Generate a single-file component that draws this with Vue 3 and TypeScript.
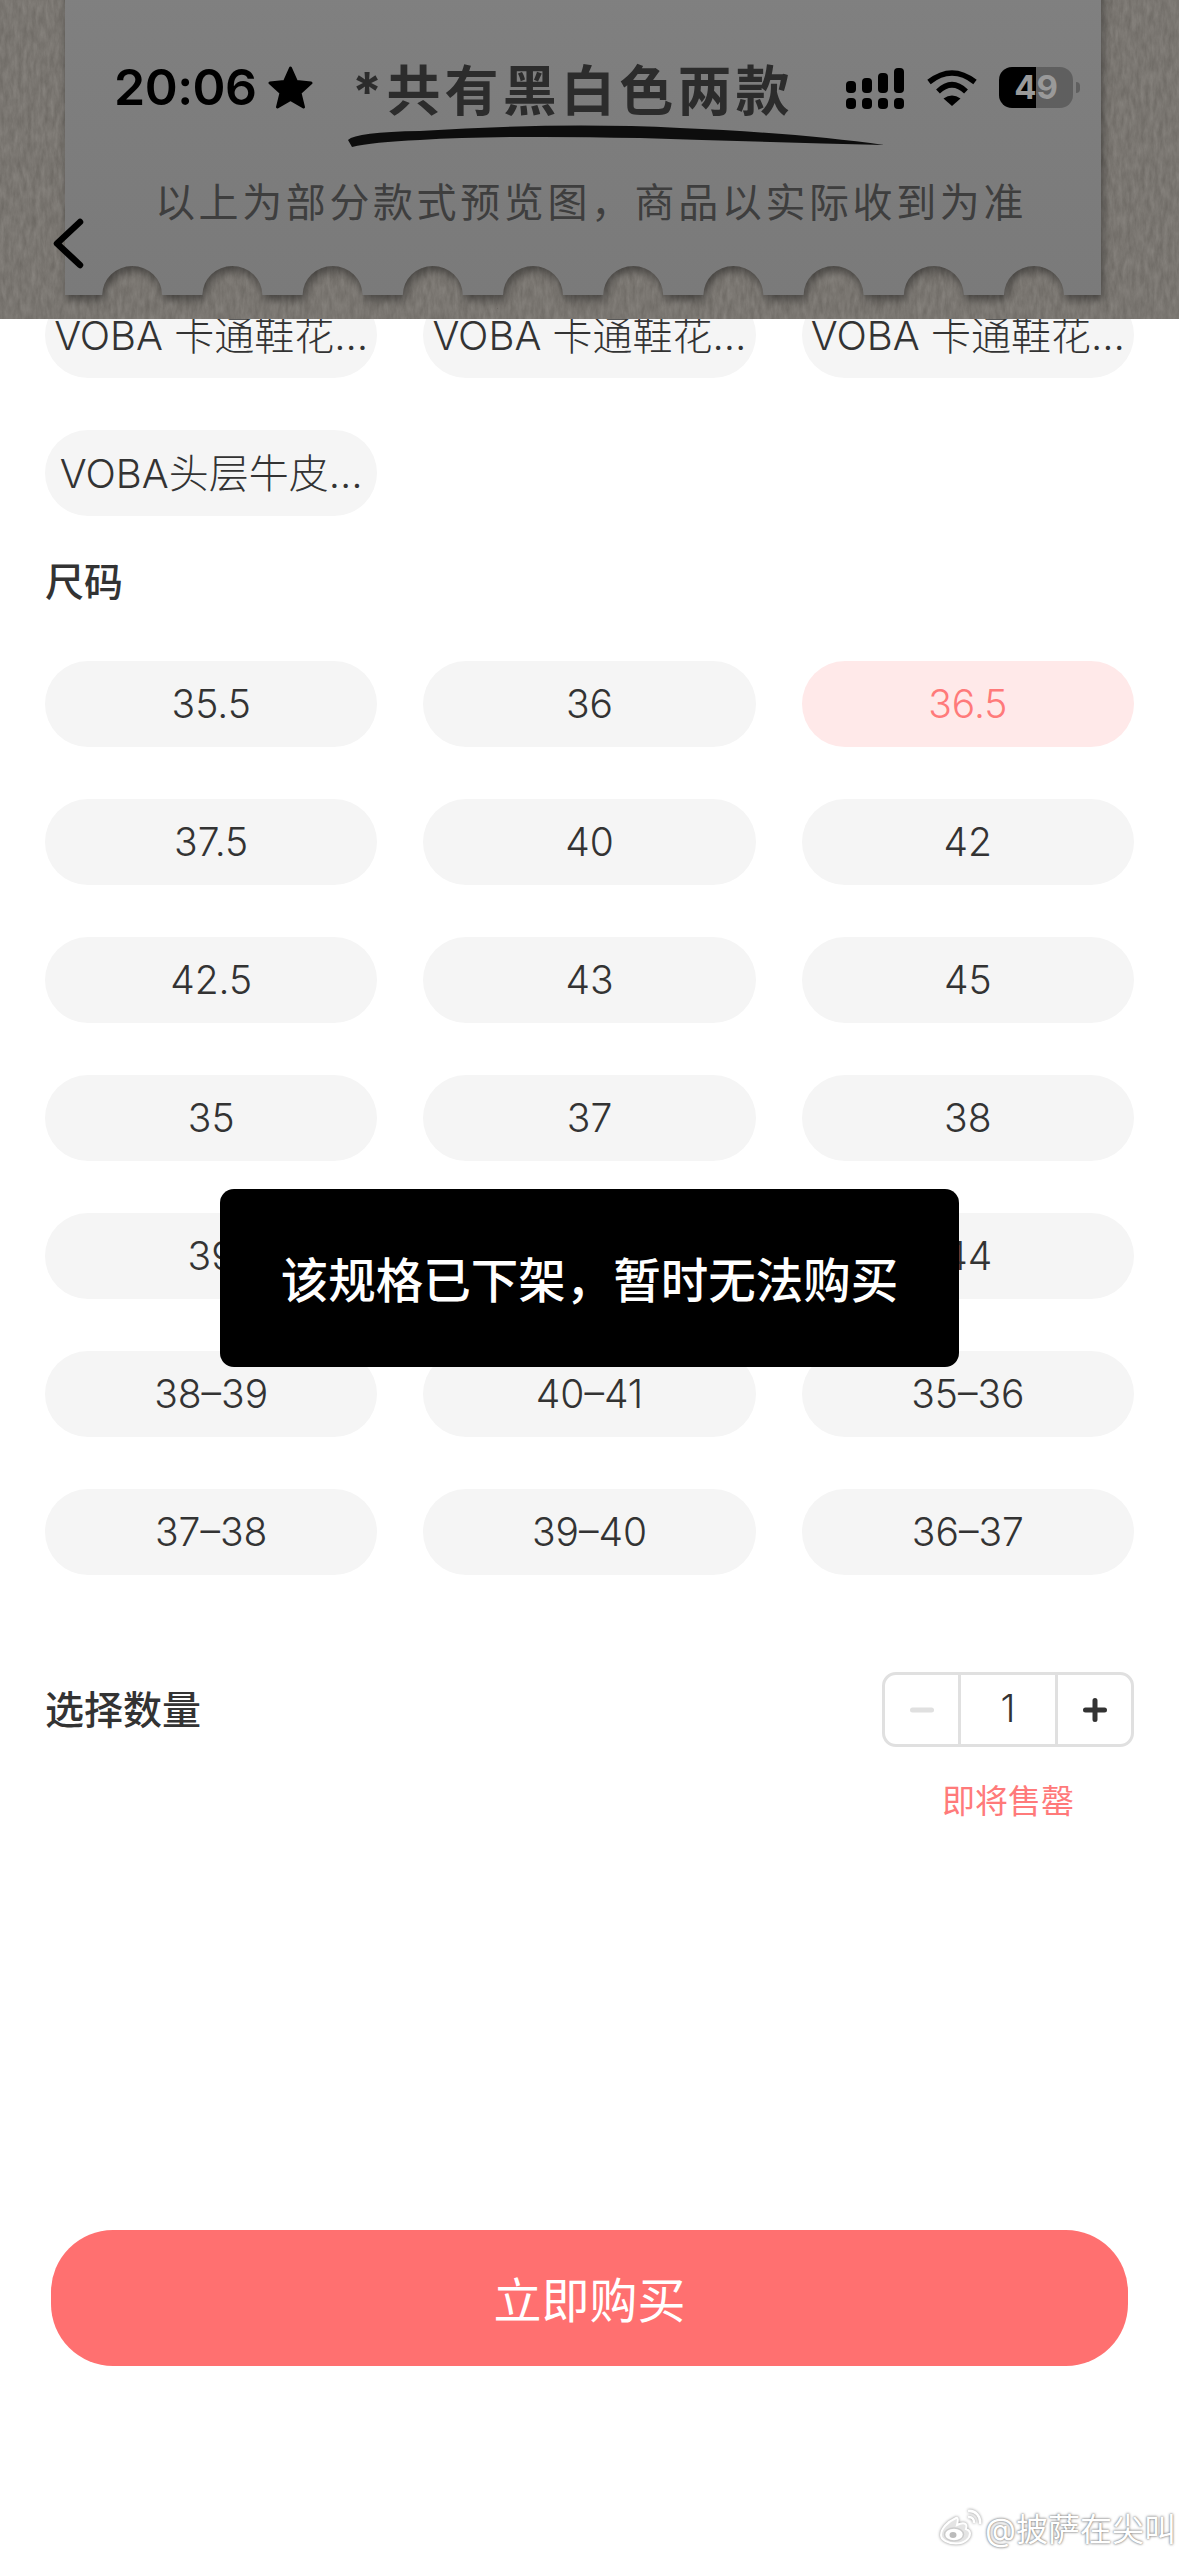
<template>
  <div class="page">
    <header class="hero">
      <svg class="hero-art" width="1179" height="319" viewBox="0 0 1179 319">
        <defs>
          <filter id="paper" x="0" y="0" width="100%" height="100%" color-interpolation-filters="sRGB">
            <feTurbulence type="fractalNoise" baseFrequency="0.22 0.07" numOctaves="5" seed="7" />
            <feColorMatrix type="matrix" values="0 0.12 0 0 0.418  0 0.12 0 0 0.403  0 0.12 0 0 0.383  0 0 0 0 1" />
          </filter>
          <linearGradient id="sheet" x1="0" y1="0" x2="0" y2="1">
            <stop offset="0" stop-color="#808080" />
            <stop offset="0.3" stop-color="#7e7e7e" />
            <stop offset="1" stop-color="#7a7a7a" />
          </linearGradient>
        </defs>
        <rect width="1179" height="319" filter="url(#paper)" />
        <path class="sheet" :d="sheetPath" fill="url(#sheet)" />
        <path
          d="M348 140 Q356 132 420 131 Q560 122 680 128 Q800 133 884 145 Q760 142 640 138 Q500 135 420 140 Q372 142 352 147 Z"
          fill="#0d0d0d"
        />
        <path d="M80 222 L57 243.500 L80 265" fill="none" stroke="#000" stroke-width="6.500" stroke-linecap="round" stroke-linejoin="round" />
      </svg>

      <div class="status">
        <span class="time">20:06</span>
        <svg class="star" width="45" height="43" viewBox="0 0 45 43">
          <path d="M22.500 2 L28.500 15.500 L43 17 L32 26.800 L35.500 41 L22.500 33.500 L9.500 41 L13 26.800 L2 17 L16.500 15.500 Z" fill="#000" stroke="#000" stroke-width="3" stroke-linejoin="round" />
        </svg>
        <span class="promo">*共有黑白色两款</span>
        <svg class="signal" width="58" height="41" viewBox="0 0 58 41">
          <g fill="#000">
            <rect x="0" y="13" width="10" height="12" rx="4" />
            <rect x="16" y="10" width="10" height="15" rx="4" />
            <rect x="32" y="5" width="10" height="20" rx="4" />
            <rect x="48" y="0" width="10" height="25" rx="4" />
            <rect x="0" y="30" width="10" height="11" rx="4" />
            <rect x="16" y="30" width="10" height="11" rx="4" />
            <rect x="32" y="30" width="10" height="11" rx="4" />
            <rect x="48" y="30" width="10" height="11" rx="4" />
          </g>
        </svg>
        <svg class="wifi" width="50" height="37" viewBox="0 0 50 37">
          <path d="M2 13 Q25 -5 48 13" fill="none" stroke="#000" stroke-width="5.500" />
          <path d="M11 22.500 Q25 9 39 22.500" fill="none" stroke="#000" stroke-width="5.500" />
          <path d="M25 37 L16.500 29.500 Q25 23.500 33.500 29.500 Z" fill="#000" />
        </svg>
        <span class="battery">49</span>
        <span class="battery-cap"></span>
      </div>

      <p class="preview-note">以上为部分款式预览图，商品以实际收到为准</p>
    </header>

    <main class="content">
      <div class="chip-grid">
        <button v-for="style in styles" :key="style.id" class="chip style-chip">{{ style.name }}</button>
      </div>

      <h2 class="label size-label">尺码</h2>
      <div class="chip-grid">
        <button v-for="size in sizes" :key="size" class="chip" :class="{ active: size === selectedSize }">
          {{ size }}
        </button>
      </div>

      <section class="quantity">
        <h2 class="label qty-label">选择数量</h2>
        <div class="stepper">
          <span class="step">
            <svg width="24" height="24" viewBox="0 0 24 24"><path d="M2.500 12 H21.500" stroke="#e0e0e0" stroke-width="5" stroke-linecap="round" /></svg>
          </span>
          <span class="count">{{ quantity }}</span>
          <span class="step">
            <svg width="24" height="24" viewBox="0 0 24 24"><path d="M2.500 12 H21.500 M12 2.500 V21.500" stroke="#333" stroke-width="5" stroke-linecap="round" /></svg>
          </span>
        </div>
      </section>
      <p class="stock-note">即将售罄</p>

      <button class="buy">立即购买</button>
    </main>

    <!-- toast -->
    <div class="toast">该规格已下架，暂时无法购买</div>

    <div class="watermark">
      <svg width="44" height="36" viewBox="0 0 44 36">
        <g fill="none" stroke="#fff">
          <path d="M17 9 C8 13 2 20 2 26 C2 31 9 34.500 17 34.500 C26 34.500 31 29 31 24.500 C31 21.500 28.500 20.500 27 20 C28 17 27.500 15 25.500 14.500 C23 14 20 15 18 16 C19 12 19.500 8 17 9 Z" fill="#e4e4e4" stroke-width="2" />
          <ellipse cx="15" cy="25.500" rx="9.500" ry="6.500" fill="#fff" stroke="#ccc" stroke-width="1.500" />
          <ellipse cx="14" cy="26" rx="3.500" ry="3" fill="#bbb" stroke="none" />
          <path d="M29 2 C36 1 42 7 41 15" stroke-width="2.500" />
          <path d="M29 8 C33 7.500 35.500 10.500 35 14" stroke-width="2.500" />
        </g>
      </svg>
      <span>@披萨在尖叫</span>
    </div>
  </div>
</template>

<script setup lang="ts">
import { computed, ref } from "vue";

const styles = [
  { id: 1, name: "VOBA 卡通鞋花…" },
  { id: 2, name: "VOBA 卡通鞋花…" },
  { id: 3, name: "VOBA 卡通鞋花…" },
  { id: 4, name: "VOBA头层牛皮…" },
];

const sizes = [
  "35.5", "36", "36.5",
  "37.5", "40", "42",
  "42.5", "43", "45",
  "35", "37", "38",
  "39", "41", "44",
  "38-39", "40-41", "35-36",
  "37-38", "39-40", "36-37",
].map((s) => s.replace("-", "–"));

const selectedSize = ref("36.5");
const quantity = ref(1);

// bottom edge of the paper sheet, with its row of punched semicircles
const sheetPath = computed(() => {
  const centers = Array.from({ length: 10 }, (_, i) => 1034 - i * 100.2);
  const notches = centers.map((c) => `H${c + 30} A30 29 0 0 0 ${c - 30} 295`).join(" ");
  return `M65 -10 H1101 V295 ${notches} H65 Z`;
});
</script>

<style scoped>
.page {
  position: relative;
  width: 1179px;
  height: 2556px;
  overflow: hidden;
  background: #fff;
  color: #333;
  font-family: Inter, "Noto Sans CJK SC", sans-serif;
}

/* Top picture */
.hero {
  position: absolute;
  top: 0;
  left: 0;
  width: 1179px;
  height: 319px;
  overflow: hidden;
  z-index: 2;
}

.hero-art {
  position: absolute;
  top: 0;
  left: 0;
}

.sheet {
  filter: drop-shadow(2px 5px 4px rgba(0, 0, 0, 0.4));
}

.status {
  position: relative;
  display: flex;
  align-items: center;
  height: 44px;
  margin-top: 65px;
  padding-left: 114px;
}

.time {
  width: 139px;
  font-size: 50px;
  font-weight: 600;
  color: #000;
  letter-spacing: -0.5px;
}

.star {
  margin-left: 15px;
}

.promo {
  margin-left: 39px;
  width: 494px;
  font-size: 54px;
  font-weight: 700;
  letter-spacing: 4.200px;
  color: #2c2c2c;
  white-space: nowrap;
}

.signal {
  margin-top: 2px;
}

.wifi {
  margin-left: 23px;
}

.battery {
  width: 74px;
  height: 41px;
  margin-left: 22px;
  border-radius: 13px;
  background: linear-gradient(90deg, #000 37px, #5f5f5f 37px);
  color: #999;
  font-size: 33px;
  font-weight: 700;
  line-height: 41px;
  text-align: center;
}

.battery-cap {
  width: 4px;
  height: 11px;
  margin-left: 3px;
  border-radius: 0 4px 4px 0;
  background: #5f5f5f;
}

.preview-note {
  position: relative;
  margin: 68px 0 0 155px;
  font-size: 40px;
  line-height: 52px;
  letter-spacing: 3.600px;
  color: #3e3e3e;
  white-space: nowrap;
}

/* Options */
.content {
  padding: 292px 45px 0;
}

.chip-grid {
  display: grid;
  grid-template-columns: repeat(3, 1fr);
  column-gap: 46px;
  row-gap: 52px;
}

.chip {
  height: 86px;
  padding: 0 0 2px;
  border: none;
  border-radius: 43px;
  background: #f5f5f5;
  color: #333;
  font-family: inherit;
  font-size: 39px;
  font-weight: 300;
  white-space: nowrap;
}

.style-chip {
  padding-bottom: 5px;
  font-size: 40px;
}

.chip.active {
  background: #ffe9e9;
  color: #ff7a7a;
}

.label {
  margin: 0;
  font-size: 39px;
  font-weight: 500;
  line-height: 54px;
  color: #333;
}

.size-label {
  margin: 39px 0 52px;
}

.quantity {
  display: flex;
  align-items: center;
  justify-content: space-between;
  margin-top: 97px;
}

.stepper {
  display: flex;
  width: 252px;
  height: 75px;
  box-sizing: border-box;
  border: 3px solid #e0e0e0;
  border-radius: 14px;
}

.step {
  display: flex;
  flex: 1;
  align-items: center;
  justify-content: center;
}

.count {
  box-sizing: border-box;
  width: 100px;
  border-left: 3px solid #e0e0e0;
  border-right: 3px solid #e0e0e0;
  font-size: 38px;
  font-weight: 300;
  line-height: 67px;
  text-align: center;
}

.stock-note {
  width: 252px;
  margin: 31px 0 0 auto;
  font-size: 33px;
  line-height: 46px;
  text-align: center;
  color: #ff7a7a;
}

.buy {
  display: block;
  width: 1077px;
  height: 136px;
  margin: 406px 0 0 6px;
  padding-bottom: 3px;
  border: none;
  border-radius: 62px;
  background: #ff7070;
  color: #fff;
  font-family: inherit;
  font-size: 48px;
}

.toast {
  position: absolute;
  top: 1189px;
  left: 220px;
  display: flex;
  align-items: center;
  justify-content: center;
  box-sizing: border-box;
  width: 739px;
  height: 178px;
  padding-bottom: 2px;
  border-radius: 14px;
  background: #000;
  color: #fff;
  font-size: 47.500px;
  font-weight: 500;
  z-index: 3;
}

.watermark {
  position: absolute;
  top: 2504px;
  left: 939px;
  display: flex;
  align-items: center;
  gap: 2px;
  color: #fff;
  font-size: 32px;
  white-space: nowrap;
  text-shadow: 0 0 2px #777, 0 0 3px #999;
}

.watermark svg {
  filter: drop-shadow(0 0 1.5px #888);
}
</style>
